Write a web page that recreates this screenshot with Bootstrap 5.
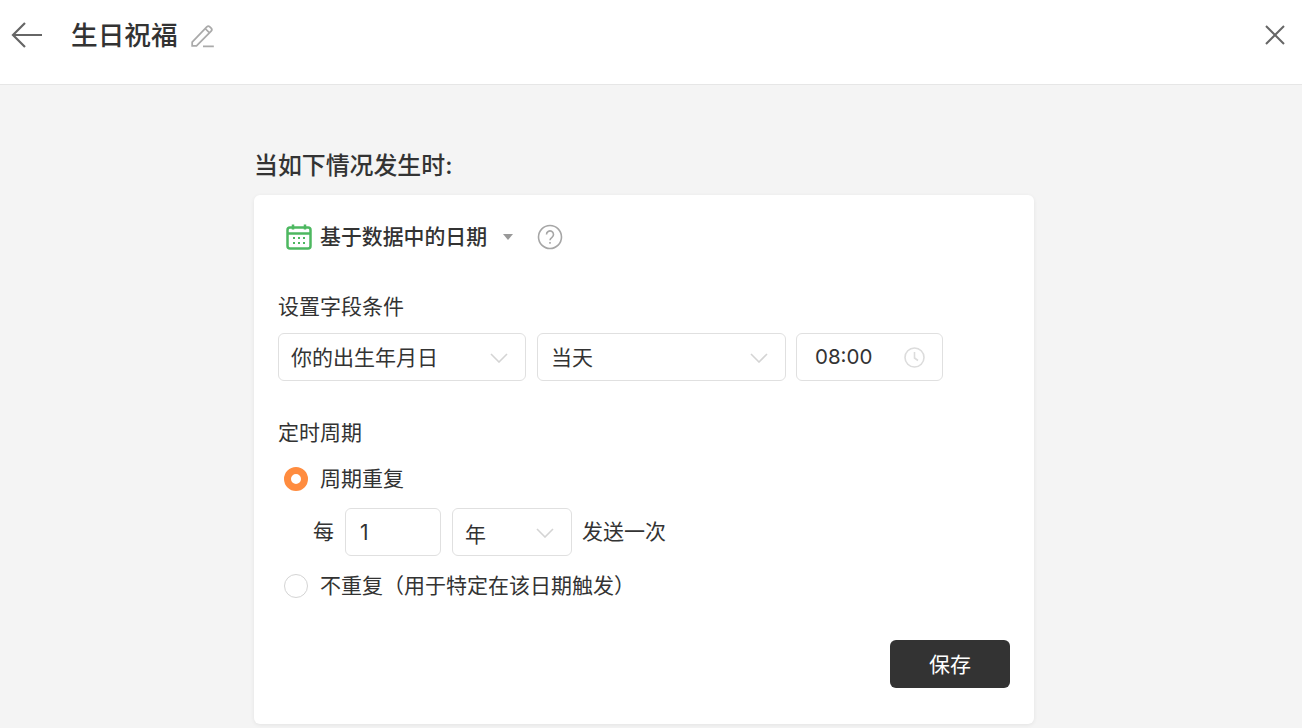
<!DOCTYPE html>
<html lang="zh"><head><meta charset="utf-8"><title>生日祝福</title>
<link rel="stylesheet" href="https://cdn.jsdelivr.net/npm/bootstrap@5.3.0/dist/css/bootstrap.min.css">
<style>
html,body{height:100%}
body{background:#f4f4f4;color:#333;font-family:"Inter","Noto Sans CJK SC",sans-serif;font-size:21px;line-height:28px;overflow:hidden}
.top-bar{height:85px;background:#fff;border-bottom:1px solid #e6e6e6;padding:0 17px 15px 11px}
.top-title{font-size:26.7px;font-weight:500;color:#333;margin:0 0 0 28px;line-height:36px}
.edit-ico{margin-left:12px}
.main-col{width:780px;margin:66px auto 0;position:relative;left:-7px}
.sec-head{font-size:23.9px;font-weight:500;line-height:30px;margin:0 0 14px}
.panel{background:#fff;border-radius:6px;box-shadow:0 1px 4px rgba(0,0,0,.07);height:529px;padding:27px 24px 36px}
.type-row{height:30px;margin-left:8px;margin-bottom:41px}
.type-name{font-weight:500;margin-left:8px;font-size:20.9px}
.tri{width:0;height:0;border-left:5px solid transparent;border-right:5px solid transparent;border-top:6px solid #999;margin:0 24px 0 16px}
.fld-label{line-height:28px;margin-bottom:12px}
.box{height:48px;background:#fff;border:1px solid #e0e0e0;border-radius:6px;padding:2px 17px 0 12px;color:#333}
.w-a{width:248px}.w-b{width:249px;padding-left:13px}.w-c{width:147px;padding:0 17px 0 18px;margin-left:-1px}
.w-d{width:96px;padding-left:14px;margin-left:11px}.w-e{width:120px;margin:0 10px 0 11px;padding-left:12px}
.year-txt{padding-top:3px}
.time-txt{font-size:20.5px}
.radio-dot{width:24px;height:24px;border-radius:50%;border:1px solid #d4d4d4;background:#fff;margin:0 12px 0 6px;flex:none}
.radio-dot.on{border:7px solid #ff8c3f}
.every-row{margin:15px 0 16px 35px;color:#333}
.opt-row{height:28px}
.save-btn{width:120px;height:48px;background:#333;border:0;border-radius:6px;color:#fff;font-size:21px;padding:2px 0 0}
.save-btn:hover{background:#333;color:#fff}
.foot-row{margin-top:40px}
.sect-two{margin-top:38px}
.sect-two .fld-label{margin-bottom:18px}
.field-row{gap:11px}
</style></head><body>
<header class="top-bar d-flex align-items-center">
<svg width="32" height="30" viewBox="0 0 32 30" fill="none" stroke="#666" stroke-width="2.2"><path d="M31 15H2M14 3 2 15l12 12"/></svg>
<h1 class="top-title">生日祝福</h1>
<svg class="edit-ico" width="26" height="26" viewBox="0 0 24 24" fill="none" stroke="#aaa" stroke-width="1.6"><path d="M2 18.5 15.5 4.5a2 2 0 0 1 2.8 0l1.2 1.2a2 2 0 0 1 0 2.8L6 22H2zM14 6l4 4M12 22.5h10"/></svg>
<svg class="ms-auto" width="20" height="20" viewBox="0 0 20 20" fill="none" stroke="#666" stroke-width="2"><path d="M1 1l18 18M19 1 1 19"/></svg>
</header>
<main class="main-col">
<h2 class="sec-head">当如下情况发生时:</h2>
<section class="panel">
<div class="type-row d-flex align-items-center">
<svg width="26" height="26" viewBox="0 0 26 26" fill="none" stroke="#4db860" stroke-width="2.5"><rect x="1.5" y="3.5" width="23" height="21" rx="2.5"/><path d="M1.5 9.5h23M7 .5v5M19 .5v5"/><path stroke-width="2" stroke-dasharray="2 3" d="M7 14h13M7 19h13"/></svg>
<span class="type-name">基于数据中的日期</span><span class="tri"></span>
<svg width="26" height="26" viewBox="0 0 26 26" fill="none" stroke="#a6a6a6" stroke-width="1.6"><circle cx="13" cy="13" r="11.5"/><path d="M9.5 10.5a3.5 3.5 0 1 1 5.5 2.8c-1.3.9-2 1.4-2 2.9"/><path d="M13 18v1.8"/></svg>
</div>
<div class="fld-label">设置字段条件</div>
<div class="d-flex flex-nowrap field-row">
<div class="box w-a d-flex align-items-center justify-content-between"><span>你的出生年月日</span><svg width="18" height="10" viewBox="0 0 18 10" fill="none" stroke="#d4d4d4" stroke-width="1.6"><path d="M1 1l8 8 8-8"/></svg></div>
<div class="box w-b d-flex align-items-center justify-content-between"><span>当天</span><svg width="18" height="10" viewBox="0 0 18 10" fill="none" stroke="#d4d4d4" stroke-width="1.6"><path d="M1 1l8 8 8-8"/></svg></div>
<div class="box w-c d-flex align-items-center justify-content-between"><span class="time-txt">08:00</span><svg width="21" height="21" viewBox="0 0 21 21" fill="none" stroke="#dcdcdc" stroke-width="1.6"><circle cx="10.5" cy="10.5" r="9.5"/><path d="M10.5 5v6l3.5 2.5"/></svg></div>
</div>
<div class="sect-two">
<div class="fld-label">定时周期</div>
<div class="opt-row d-flex align-items-center"><span class="radio-dot on"></span><span>周期重复</span></div>
<div class="every-row d-flex align-items-center"><span>每</span>
<div class="box w-d d-flex align-items-center"><span>1</span></div>
<div class="box w-e d-flex align-items-center justify-content-between"><span class="year-txt">年</span><svg width="18" height="10" viewBox="0 0 18 10" fill="none" stroke="#d4d4d4" stroke-width="1.6"><path d="M1 1l8 8 8-8"/></svg></div>
<span>发送一次</span></div>
<div class="opt-row d-flex align-items-center"><span class="radio-dot"></span><span>不重复（用于特定在该日期触发）</span></div>
</div>
<div class="foot-row d-flex justify-content-end"><button type="button" class="btn save-btn">保存</button></div>
</section>
</main>
<script src="https://cdn.jsdelivr.net/npm/bootstrap@5.3.0/dist/js/bootstrap.bundle.min.js"></script>
</body></html>
